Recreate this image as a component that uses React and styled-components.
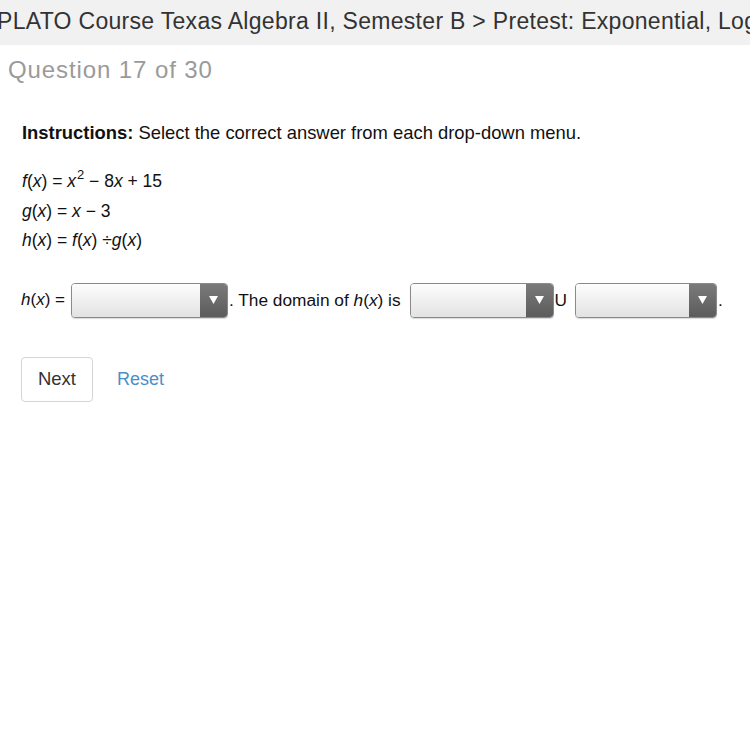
import React from "react";
import styled, { createGlobalStyle } from "styled-components";

const Global = createGlobalStyle`
  body {
    margin: 0;
    background: #fff;
    font-family: "Liberation Sans", Arial, sans-serif;
    color: #222;
  }
`;

const App = () => {
  return (
    <Page>
      <Global />
      <Header>
        <span>PLATO Course Texas Algebra II, Semester B &gt; Pretest: Exponential, Logarithmic</span>
      </Header>
      <Title>Question 17 of 30</Title>
      <Body>
        <Instructions>
          <b>Instructions:</b> Select the correct answer from each drop-down menu.
        </Instructions>
        <Equations>
          <Line>
            <i>f</i>(<i>x</i>) = <i>x</i>
            <sup>2</sup> &minus; 8<i>x</i> + 15
          </Line>
          <Line>
            <i>g</i>(<i>x</i>) = <i>x</i> &minus; 3
          </Line>
          <Line>
            <i>h</i>(<i>x</i>) = <i>f</i>(<i>x</i>) &divide;<i>g</i>(<i>x</i>)
          </Line>
        </Equations>
        <AnswerRow>
          <Small>
            <i>h</i>(<i>x</i>) =
          </Small>
          <Dropdown w={157} />
          <span>
            . The domain of <i>h</i>(<i>x</i>) is
          </span>
          <Dropdown w={144} gap={9} />
          <span>U</span>
          <Dropdown w={142} gap={8} />
          <span>.</span>
        </AnswerRow>
        <Actions>
          <NextButton>Next</NextButton>
          <ResetLink>Reset</ResetLink>
        </Actions>
      </Body>
    </Page>
  );
};

const Dropdown = ({ w, gap = 4 }) => (
  <Select w={w} gap={gap}>
    <Field />
    <Arrow>
      <svg width="9" height="8" viewBox="0 0 9 8">
        <path d="M0 0 L9 0 L4.5 8 Z" fill="#fff" />
      </svg>
    </Arrow>
  </Select>
);

export default App;

const Page = styled.div`
  width: 750px;
  height: 750px;
  overflow: hidden;
`;
const Header = styled.div`
  height: 45px;
  background: #f1f1f1;
  display: flex;
  align-items: center;
  overflow: hidden;
  white-space: nowrap;
  font-size: 23px;
  letter-spacing: 0.3px;
  color: #333;

  span {
    margin-left: -3px;
    margin-top: -2px;
  }
`;
const Title = styled.div`
  padding: 11px 0 0 8px;
  font-size: 24px;
  line-height: 28px;
  letter-spacing: 0.9px;
  color: #9a9a9a;
`;
const Body = styled.div`
  padding: 0 22px;
`;
const Instructions = styled.div`
  margin-top: 38px;
  font-size: 18.4px;
  line-height: 22px;
  color: #111;

  b {
    font-weight: bold;
  }
`;
const Equations = styled.div`
  margin-top: 23px;
  font-size: 17.5px;
  color: #111;
`;
const Line = styled.div`
  height: 29.5px;
  line-height: 29.5px;

  sup {
    font-size: 13px;
    line-height: 0;
    vertical-align: 8px;
    margin-left: 1px;
  }
`;
const AnswerRow = styled.div`
  margin-top: 27px;
  display: flex;
  align-items: center;
  font-size: 17.3px;
  color: #111;
  margin-left: -1px;
`;
const Small = styled.span`
  font-size: 17px;
  margin-right: 2px;
`;
const Select = styled.div`
  width: ${({ w }) => w}px;
  height: 35px;
  box-sizing: border-box;
  border: 1px solid #8a8a8a;
  border-radius: 4px;
  display: flex;
  overflow: hidden;
  margin: 0 1px 0 ${({ gap }) => gap}px;
  box-shadow: 0 1px 1px rgba(0, 0, 0, 0.15);
`;
const Field = styled.div`
  flex: 1;
  background: linear-gradient(#fdfdfd, #e2e2e2);
`;
const Arrow = styled.div`
  width: 27px;
  background: linear-gradient(#7a7a7a, #5c5c5c);
  display: flex;
  align-items: center;
  justify-content: center;
`;
const Actions = styled.div`
  margin-top: 39px;
  display: flex;
  align-items: center;
  margin-left: -1px;
`;
const NextButton = styled.button`
  width: 72px;
  height: 45px;
  background: #fff;
  border: 1px solid #d4d4d4;
  border-radius: 4px;
  font-family: "Liberation Sans", Arial, sans-serif;
  font-size: 18.5px;
  color: #333;
`;
const ResetLink = styled.a`
  margin-left: 24px;
  font-size: 18px;
  color: #4b8fc9;
`;
